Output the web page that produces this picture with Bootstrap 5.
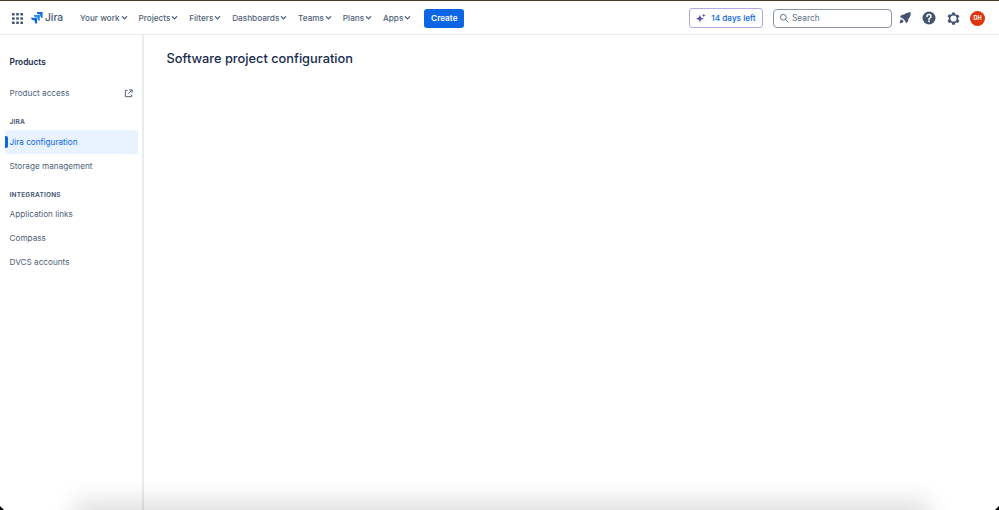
<!DOCTYPE html>
<html lang="en">
<head>
<meta charset="utf-8">
<title>Software project configuration</title>
<link href="https://cdn.jsdelivr.net/npm/bootstrap@5.3.0/dist/css/bootstrap.min.css" rel="stylesheet">
<style>
html,body{height:100%;overflow:hidden;background:#fff}
body{font-family:Inter,"Liberation Sans",sans-serif;color:#44546f;font-size:8.2px;letter-spacing:0}
.shell{height:510px;border-top:1px solid #4a3a2e;position:relative;overflow:hidden}
.topbar{height:34px;border-bottom:1px solid #e9ecef;padding:1px 13px 0 11px}
.waffle{width:13px;height:13px;display:block}
.brand{margin-left:7px;color:#44546f;font-size:10.2px;font-weight:500;gap:2px;width:44px}
.topmenu{margin-left:5px;gap:10.8px}
.topitem{font-size:8.2px;font-weight:500;color:#505f79;gap:1px;white-space:nowrap}
.chev{width:7px;height:7px}
.createbtn{margin-left:13px;background:#0c66e4;color:#fff;border:0;border-radius:3px;font-size:8.2px;font-weight:600;height:19px;width:40px;padding:0;display:flex;align-items:center;justify-content:center}
.trialbtn{width:74px;height:20px;border:1px solid #b3a6ec;border-radius:3px;color:#0c66e4;font-size:8.2px;font-weight:500;gap:5px;background:#fff}
.searchbox{margin-left:10px;width:119px;height:19px;border:1px solid #8993a4;border-radius:4px;padding-left:5px;gap:3px;color:#626f86;font-size:8.3px}
.iconset{margin-left:1px;gap:0}
.iconcell{width:24px;height:20px;display:flex;align-items:center;justify-content:center}
.avatar{margin-left:5px;margin-right:1px;width:15px;height:15px;border-radius:50%;background:#de350b;color:#fff;font-size:5.5px;font-weight:700;display:flex;align-items:center;justify-content:center}
.mainrow{height:475px}
.sidebar{width:144px;flex:none;border-right:2px solid #ebecf0;padding:0 4px 0 5px}
.sidehead{margin:19.5px 0 0 4.5px;height:14px;line-height:14px;font-size:8.4px;font-weight:600;color:#172b4d}
.sidelink{height:24px;padding:0 5px 0 4.5px;font-size:8.2px;color:#505f79;border-radius:3px;position:relative}
.sidelink.first{margin-top:12.5px}
.sidelink.activeitem{background:#e9f2ff;color:#0c66e4}
.sidelink.activeitem::before{content:"";position:absolute;left:0;top:6px;bottom:6px;width:3px;border-radius:0 2px 2px 0;background:#0c66e4}
.sidegroup{padding-left:4.5px;font-size:6.5px;font-weight:700;letter-spacing:.2px;color:#505f79;height:12px;line-height:12px}
.sidegroup.one{margin-top:11px;margin-bottom:2px}
.sidegroup.two{margin-top:10.5px;margin-bottom:2px}
.content{padding:15px 0 0 22.5px}
.pagetitle{margin:0;font-size:12.8px;font-weight:500;color:#172b4d;line-height:18px}
.bottomfade{position:absolute;left:85px;right:80px;bottom:-22px;height:20px;box-shadow:0 0 26px 10px rgba(0,0,0,.14);pointer-events:none}
.cornerl,.cornerr{position:absolute;bottom:0;width:4px;height:4px;background:#000}
.cornerl{left:0;clip-path:polygon(0 0,100% 100%,0 100%)}
.cornerr{right:0;clip-path:polygon(100% 0,100% 100%,0 100%)}
</style>
</head>
<body>
<div class="shell">
  <nav class="topbar d-flex align-items-center">
    <svg class="waffle" viewBox="0 0 13 13" fill="#44546f"><rect x="1" y="1" width="2.6" height="2.6" rx=".5"/><rect x="5.2" y="1" width="2.6" height="2.6" rx=".5"/><rect x="9.4" y="1" width="2.6" height="2.6" rx=".5"/><rect x="1" y="5.2" width="2.6" height="2.6" rx=".5"/><rect x="5.2" y="5.2" width="2.6" height="2.6" rx=".5"/><rect x="9.4" y="5.2" width="2.6" height="2.6" rx=".5"/><rect x="1" y="9.4" width="2.6" height="2.6" rx=".5"/><rect x="5.2" y="9.4" width="2.6" height="2.6" rx=".5"/><rect x="9.4" y="9.4" width="2.6" height="2.6" rx=".5"/></svg>
    <div class="brand d-flex align-items-center">
      <svg width="12" height="12" viewBox="0 0 12 12"><path fill="#1868db" d="M11.5 0H5.600a2.400 2.400 0 0 0 2.400 2.400h1.200v1.200a2.400 2.400 0 0 0 2.400 2.300V.4a.5.5 0 0 0-.1-.4z"/><path fill="#2684ff" d="M8.700 2.900H2.800a2.400 2.400 0 0 0 2.400 2.400h1.200v1.200a2.400 2.400 0 0 0 2.400 2.300V3.300a.5.5 0 0 0-.1-.4z"/><path fill="#0c66e4" d="M5.900 5.800H0a2.400 2.400 0 0 0 2.400 2.400h1.200v1.200A2.400 2.400 0 0 0 6 11.700V6.200a.5.5 0 0 0-.1-.4z"/></svg>
      <span>Jira</span>
    </div>
    <div class="topmenu d-flex align-items-center">
      <div class="topitem d-flex align-items-center">Your work<svg class="chev" viewBox="0 0 8 8"><path d="M1.500 3l2.500 2.500L6.500 3" fill="none" stroke="#44546f" stroke-width="1.400" stroke-linecap="round"/></svg></div>
      <div class="topitem d-flex align-items-center">Projects<svg class="chev" viewBox="0 0 8 8"><path d="M1.500 3l2.500 2.500L6.500 3" fill="none" stroke="#44546f" stroke-width="1.400" stroke-linecap="round"/></svg></div>
      <div class="topitem d-flex align-items-center">Filters<svg class="chev" viewBox="0 0 8 8"><path d="M1.500 3l2.500 2.500L6.500 3" fill="none" stroke="#44546f" stroke-width="1.400" stroke-linecap="round"/></svg></div>
      <div class="topitem d-flex align-items-center">Dashboards<svg class="chev" viewBox="0 0 8 8"><path d="M1.500 3l2.500 2.500L6.500 3" fill="none" stroke="#44546f" stroke-width="1.400" stroke-linecap="round"/></svg></div>
      <div class="topitem d-flex align-items-center">Teams<svg class="chev" viewBox="0 0 8 8"><path d="M1.500 3l2.500 2.500L6.500 3" fill="none" stroke="#44546f" stroke-width="1.400" stroke-linecap="round"/></svg></div>
      <div class="topitem d-flex align-items-center">Plans<svg class="chev" viewBox="0 0 8 8"><path d="M1.500 3l2.500 2.500L6.500 3" fill="none" stroke="#44546f" stroke-width="1.400" stroke-linecap="round"/></svg></div>
      <div class="topitem d-flex align-items-center">Apps<svg class="chev" viewBox="0 0 8 8"><path d="M1.500 3l2.500 2.500L6.500 3" fill="none" stroke="#44546f" stroke-width="1.400" stroke-linecap="round"/></svg></div>
    </div>
    <button class="createbtn" type="button">Create</button>
    <div class="ms-auto d-flex align-items-center">
      <div class="trialbtn d-flex align-items-center justify-content-center">
        <svg width="10" height="10" viewBox="0 0 9 9" fill="#5e4db2"><path d="M3.500 1.500l1 2.500 2.500 1-2.500 1-1 2.500-1-2.500-2.500-1 2.500-1z"/><path d="M7 .5l.5 1.200 1.200.5-1.200.5L7 3.900l-.5-1.200-1.200-.5 1.200-.5z"/></svg>
        <span>14 days left</span>
      </div>
      <div class="searchbox d-flex align-items-center">
        <svg width="10" height="10" viewBox="0 0 10 10" fill="none" stroke="#626f86" stroke-width="1"><circle cx="4.300" cy="4.300" r="2.900"/><path d="M6.500 6.500L9 9" stroke-linecap="round"/></svg>
        <span>Search</span>
      </div>
      <div class="iconset d-flex align-items-center">
        <div class="iconcell"><svg width="12" height="12" viewBox="0 0 12 12" fill="#44546f"><path d="M11.800.2C8.800.1 6.500 1 4.900 2.800H2.800L.8 5l2.400.9 2.900 2.900.9 2.400 2.200-2V7.100c1.800-1.600 2.700-3.900 2.600-6.900z"/><path d="M2.700 7.300c-1.200.5-1.900 1.800-2 3.900 2.100-.1 3.400-.8 3.900-2z"/></svg></div>
        <div class="iconcell"><svg width="14" height="14" viewBox="0 0 14 14"><circle cx="7" cy="7" r="6.500" fill="#44546f"/><path d="M5 5.400C5 4.300 5.900 3.600 7 3.600s2 .8 2 1.800c0 1.500-2 1.500-2 3" fill="none" stroke="#fff" stroke-width="1.500" stroke-linecap="round"/><circle cx="7" cy="10.300" r=".95" fill="#fff"/></svg></div>
        <div class="iconcell"><svg width="13" height="13" viewBox="0 0 13 13"><path fill="#44546f" d="M5.200.6h2.600l.4 1.700 1.200.7 1.700-.5 1.300 2.300-1.300 1.200v1.400l1.300 1.200-1.300 2.300-1.700-.5-1.200.7-.4 1.700H5.200l-.4-1.700-1.200-.7-1.700.5L.6 8.400l1.300-1.200V5.800L.6 4.600l1.300-2.300 1.700.5 1.200-.7z"/><circle cx="6.500" cy="6.500" r="3.100" fill="#fff"/></svg></div>
        <div class="avatar">DH</div>
      </div>
    </div>
  </nav>
  <div class="mainrow d-flex">
    <aside class="sidebar">
      <div class="sidehead">Products</div>
      <div class="sidelink first d-flex align-items-center justify-content-between">
        <span>Product access</span>
        <svg width="9" height="9" viewBox="0 0 10 10" fill="none" stroke="#505f79" stroke-width="1.100"><path d="M4 1.500H1.500v7h7V6"/><path d="M5.800 1h3.200v3.200M9 1L4.800 5.200"/></svg>
      </div>
      <div class="sidegroup one">JIRA</div>
      <div class="sidelink activeitem d-flex align-items-center">Jira configuration</div>
      <div class="sidelink d-flex align-items-center">Storage management</div>
      <div class="sidegroup two">INTEGRATIONS</div>
      <div class="sidelink d-flex align-items-center">Application links</div>
      <div class="sidelink d-flex align-items-center">Compass</div>
      <div class="sidelink d-flex align-items-center">DVCS accounts</div>
    </aside>
    <main class="content flex-grow-1">
      <h1 class="pagetitle">Software project configuration</h1>
    </main>
  </div>
  <div class="bottomfade"></div>
  <div class="cornerl"></div>
  <div class="cornerr"></div>
</div>
<script src="https://cdn.jsdelivr.net/npm/bootstrap@5.3.0/dist/js/bootstrap.bundle.min.js"></script>
</body>
</html>
